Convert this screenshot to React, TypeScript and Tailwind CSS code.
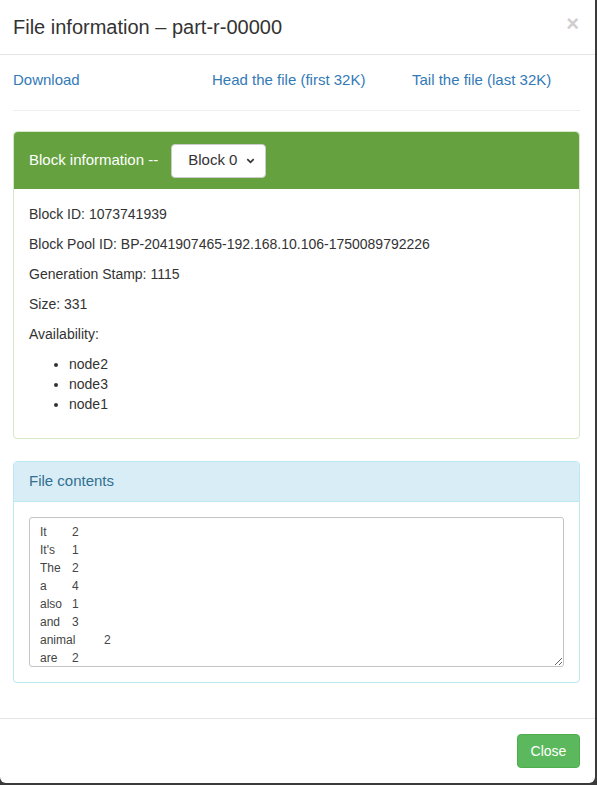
const contents = `It\t2
It's\t1
The\t2
a\t4
also\t1
and\t3
animal\t2
are\t2
as\t1
big\t1`;

const nodes = ["node2", "node3", "node1"];

export default function App() {
  return (
    <div className="h-[785px] w-[597px] bg-[#3b3b3b] font-['Liberation_Sans',Arial,sans-serif] text-[#333]">
      <div className="flex h-[783px] w-[595px] flex-col rounded-b-md bg-white">
        {/* header */}
        <div className="flex h-[55px] items-center justify-between border-b border-[#e5e5e5] pl-[13px] pr-[16px]">
          <h4 className="text-[20px] leading-none">File information – part-r-00000</h4>
          <span className="-mt-[6px] text-[22px] font-bold leading-none text-[#cfcfcf]">×</span>
        </div>

        {/* body */}
        <div className="flex-1 pl-[13px] pr-[15px] pt-[15px]">
          <div className="grid grid-cols-[199px_200px_1fr] text-[15px] leading-5 text-[#337ab7]">
            <a>Download</a>
            <a>Head the file (first 32K)</a>
            <a>Tail the file (last 32K)</a>
          </div>
          <hr className="my-5 border-t border-[#eee]" />

          <div className="rounded border border-[#d6e9c6]">
            <div className="flex h-[57px] items-center gap-[13px] rounded-t bg-[#65a23f] px-[15px] text-[15px] text-white">
              <span>Block information --</span>
              <div className="flex h-[34px] w-[95px] items-center justify-between rounded border border-[#ccc] bg-white pl-[16px] pr-[9px] text-[15px] text-[#333]">
                <span>Block 0</span>
                <svg viewBox="0 0 12 12" className="h-[11px] w-[11px]" fill="none" stroke="#333" strokeWidth={1.8}>
                  <path d="M2.5 4.5l3.5 3.5 3.5-3.5" />
                </svg>
              </div>
            </div>
            <div className="p-[15px] text-[14px] leading-5">
              <p className="mb-[10px]">Block ID: 1073741939</p>
              <p className="mb-[10px]">Block Pool ID: BP-2041907465-192.168.10.106-1750089792226</p>
              <p className="mb-[10px]">Generation Stamp: 1115</p>
              <p className="mb-[10px]">Size: 331</p>
              <p className="mb-[10px]">Availability:</p>
              <ul className="mb-[9px] list-disc pl-10">
                {nodes.map((n) => (
                  <li key={n}>{n}</li>
                ))}
              </ul>
            </div>
          </div>

          <div className="mt-[22px] rounded border border-[#bce8f1]">
            <div className="flex h-[40px] items-center rounded-t border-b border-[#bce8f1] bg-[#d9edf7] px-[15px] text-[15px] text-[#31708f]">
              File contents
            </div>
            <div className="p-[15px]">
              <textarea
                readOnly
                value={contents}
                className="block h-[150px] w-full rounded-[3px] border border-[#c4c4c4] px-[10px] pt-[5px] text-[12px] leading-[18px] text-[#444] outline-none [tab-size:32px]"
              />
            </div>
          </div>
        </div>

        {/* footer */}
        <div className="flex justify-end border-t border-[#e5e5e5] pb-[15px] pl-[13px] pr-[15px] pt-[15px]">
          <button className="h-[34px] w-[63px] rounded border border-[#4cae4c] bg-[#5cb85c] text-[14px] text-white">
            Close
          </button>
        </div>
      </div>
    </div>
  );
}
